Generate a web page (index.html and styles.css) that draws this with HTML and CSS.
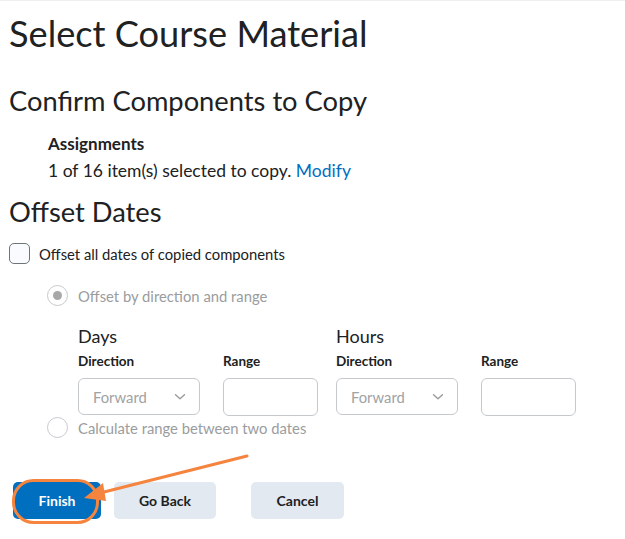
FILE: index.html
```html
<!DOCTYPE html>
<html>
<head>
<meta charset="utf-8">
<link rel="stylesheet" href="styles.css">
</head>
<body>
<div class="page">
  <h1 class="title">Select Course Material</h1>
  <h2 class="section-title">Confirm Components to Copy</h2>
  <div class="component">
    <div class="component-name">Assignments</div>
    <div class="component-desc">1 of 16 item(s) selected to copy. <a class="link" href="#">Modify</a></div>
  </div>
  <h2 class="section-title offset-title">Offset Dates</h2>
  <label class="check-row">
    <span class="checkbox"></span>
    <span class="check-label">Offset all dates of copied components</span>
  </label>
  <div class="options">
    <div class="radio-row">
      <span class="radio checked"></span>
      <span class="radio-label">Offset by direction and range</span>
    </div>
    <div class="groups">
      <div class="group">
        <div class="group-title">Days</div>
        <div class="fields">
          <div class="field">
            <div class="field-label">Direction</div>
            <div class="select"><span>Forward</span>
              <svg class="chev" width="12" height="8" viewBox="0 0 12 8"><path d="M1.5 1.8 L6 5.8 L10.5 1.8" fill="none" stroke="#9a9a9a" stroke-width="1.4" stroke-linecap="round" stroke-linejoin="round"/></svg>
            </div>
          </div>
          <div class="field">
            <div class="field-label">Range</div>
            <div class="input"></div>
          </div>
        </div>
      </div>
      <div class="group">
        <div class="group-title">Hours</div>
        <div class="fields">
          <div class="field">
            <div class="field-label">Direction</div>
            <div class="select"><span>Forward</span>
              <svg class="chev" width="12" height="8" viewBox="0 0 12 8"><path d="M1.5 1.8 L6 5.8 L10.5 1.8" fill="none" stroke="#9a9a9a" stroke-width="1.4" stroke-linecap="round" stroke-linejoin="round"/></svg>
            </div>
          </div>
          <div class="field">
            <div class="field-label">Range</div>
            <div class="input"></div>
          </div>
        </div>
      </div>
    </div>
    <div class="radio-row radio-row-2">
      <span class="radio"></span>
      <span class="radio-label">Calculate range between two dates</span>
    </div>
  </div>
  <div class="buttons">
    <button class="btn primary">Finish</button>
    <button class="btn">Go Back</button>
    <button class="btn cancel">Cancel</button>
  </div>
</div>
<svg class="annotation" width="625" height="539" viewBox="0 0 625 539">
  <rect x="13.5" y="479.5" width="84" height="42" rx="20" ry="20" fill="none" stroke="#f5843f" stroke-width="3"/>
  <line x1="247" y1="455" x2="100" y2="492" stroke="#f5843f" stroke-width="3" stroke-linecap="round"/>
  <polygon points="84,497 103,482 106,500" fill="#f5843f"/>
</svg>
</body>
</html>
```
FILE: styles.css
```css
* { box-sizing: border-box; }
html, body { margin: 0; padding: 0; background: #fff; }
body {
  font-family: Lato, "Noto Sans", sans-serif;
  color: #202122;
  width: 625px;
  height: 539px;
  overflow: hidden;
  position: relative;
  border-top: 1px solid #f0f0f0;
}
.page { padding: 0 0 0 9px; }
.title {
  font-size: 36.2px;
  font-weight: 400;
  margin: 11px 0 0 0;
  line-height: 42px;
  letter-spacing: 0;
}
.section-title {
  font-size: 27.3px;
  font-weight: 400;
  margin: 29px 0 0 0;
  line-height: 36px;
}
.component { padding-left: 39px; margin-top: 12px; }
.component-name { font-size: 17px; font-weight: 700; line-height: 25px; }
.component-desc { font-size: 17.5px; line-height: 25px; margin-top: 2px; }
.link { color: #006fbf; text-decoration: none; }
.offset-title { margin-top: 11px; }
.check-row { display: flex; align-items: center; margin-top: 13px; }
.checkbox {
  width: 21px; height: 21px;
  border: 1px solid #6e7477;
  border-radius: 5px;
  background: #f9fbff;
}
.check-label { font-size: 14.8px; margin-left: 9px; }
.options { padding-left: 38px; }
.radio-row { display: flex; align-items: center; margin-top: 21px; }
.radio {
  width: 21px; height: 21px;
  border: 1px solid #c6c9cc;
  border-radius: 50%;
  background: #fff;
  display: flex; align-items: center; justify-content: center;
}
.radio.checked::after {
  content: ""; width: 9px; height: 9px; border-radius: 50%; background: #a8a8a8;
}
.radio-label { font-size: 14.8px; color: #9a9c9e; margin-left: 10px; }
.groups { display: flex; padding-left: 31px; margin-top: 18px; gap: 18px; }
.group-title { font-size: 18px; line-height: 24px; }
.fields { display: flex; gap: 23px; margin-top: 4px; }
.field-label { font-size: 13.5px; font-weight: 700; line-height: 18px; margin-bottom: 8px; }
.select {
  width: 122px; height: 37px;
  border: 1px solid #c6c9cc;
  border-radius: 6px;
  display: flex; align-items: center; justify-content: space-between;
  padding: 0 13px 0 14px;
  font-size: 14.8px; color: #a0a2a4;
}
.input {
  width: 95px; height: 38px;
  border: 1px solid #c6c9cc;
  border-radius: 6px;
}
.fields .field:first-child { width: 122px; }
.radio-row-2 { margin-top: 1px; }
.buttons { display: flex; margin-top: 44px; padding-left: 4px; }
.btn {
  font-family: Lato, "Noto Sans", sans-serif;
  font-size: 14px; font-weight: 700;
  height: 37px;
  border: none;
  border-radius: 5px;
  background: #e3e9f1;
  color: #202122;
  padding: 0;
  width: 102px;
  margin-right: 35px;
}
.btn.primary { background: #006fbf; color: #fff; width: 88px; margin-right: 13px; }
.btn.cancel { width: 93px; }
.annotation { position: absolute; left: 0; top: 0; pointer-events: none; }
```
